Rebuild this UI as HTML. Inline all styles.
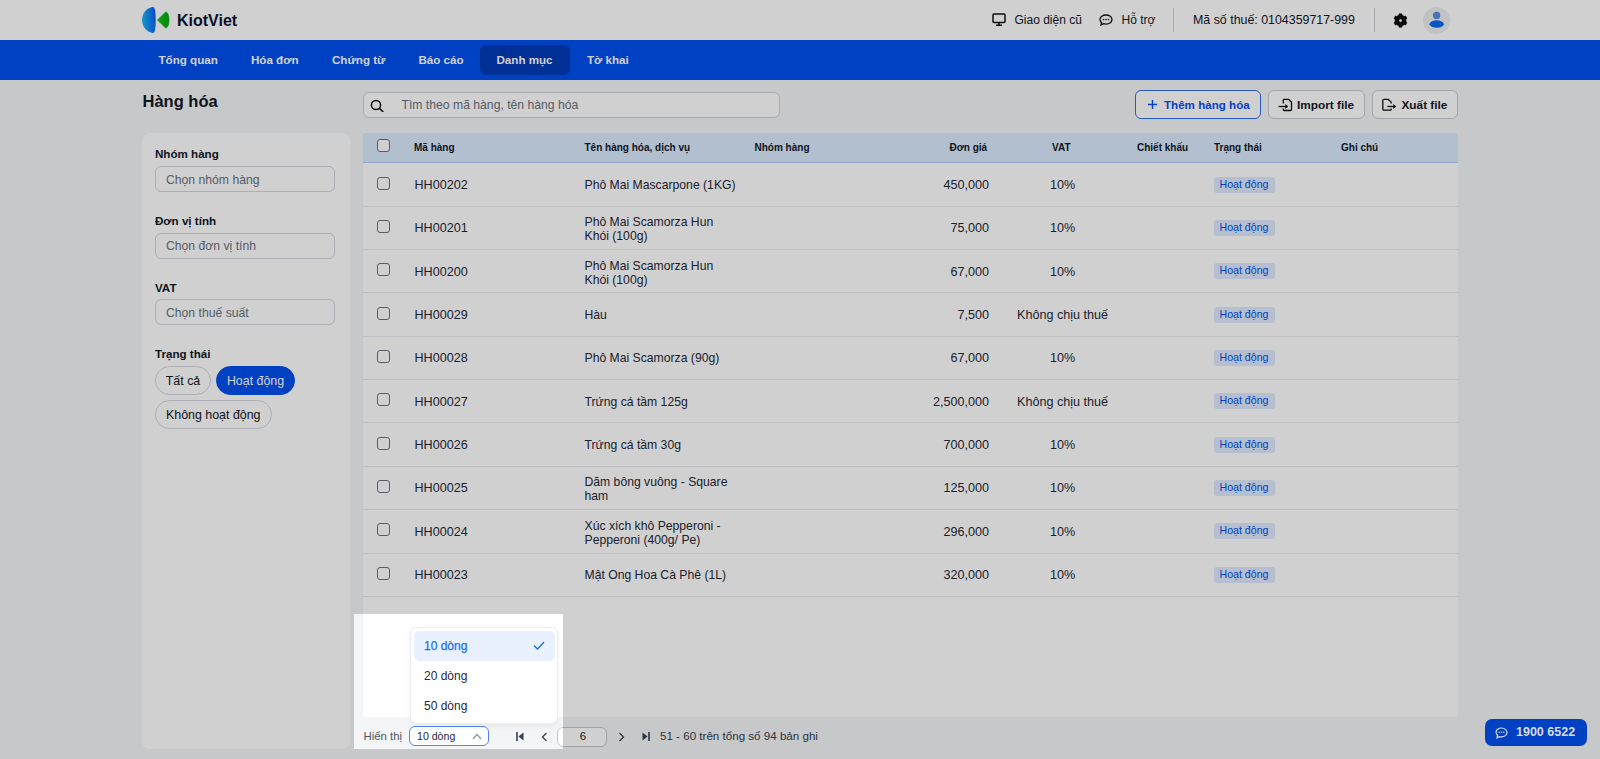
<!DOCTYPE html>
<html><head><meta charset="utf-8">
<style>
*{box-sizing:border-box;margin:0;padding:0}
html,body{width:1600px;height:759px;overflow:hidden}
body{position:relative;background:#f4f5f7;font-family:"Liberation Sans",sans-serif;color:#111827}
.abs{position:absolute}
.t{position:absolute;white-space:nowrap;line-height:20px;height:20px}
#hdr{left:0;top:0;width:1600px;height:40px;background:#fff}
#nav{left:0;top:40px;width:1600px;height:40px;background:#0050f0}
.nv{position:absolute;top:49.6px;height:20px;line-height:20px;font-size:11.6px;font-weight:700;color:#fff;white-space:nowrap}
#navact{left:480px;top:45px;width:90px;height:30px;border-radius:6px;background:#003ab8}
.card{position:absolute;background:#fff;border-radius:8px}
.inp{position:absolute;left:155px;width:180px;height:26px;border:1px solid #d4d7dd;border-radius:6px;background:#fff}
.inp span{position:absolute;left:10px;top:2.6px;line-height:20px;font-size:12.2px;color:#6b7280;white-space:nowrap}
.lbl{position:absolute;left:155px;height:20px;line-height:20px;font-size:11.6px;font-weight:700;color:#111827;white-space:nowrap}
.chip{position:absolute;height:29px;padding-top:0.3px;border:1px solid #d4d7dd;border-radius:15px;background:#fff;font-size:12.4px;line-height:29px;text-align:center;white-space:nowrap;color:#111827}
.btn{position:absolute;top:90px;height:28.5px;border:1px solid #c9ced6;border-radius:6px;background:#fff}
.btn span{position:absolute;top:4px;line-height:20px;font-size:11.8px;font-weight:700;white-space:nowrap;color:#111827}
#thead{left:363px;top:133px;width:1095px;height:30px;background:#dbeafe;border-bottom:1px solid #afcdfa;border-radius:3px 3px 0 0}
.th{position:absolute;top:138px;height:20px;line-height:20px;font-size:10px;font-weight:700;white-space:nowrap;color:#111827}
.row{position:absolute;left:363px;width:1095px;border-bottom:1px solid #e3e6ea}
.cb{position:absolute;left:376.8px;width:13px;height:13px;border:1.3px solid #6b7280;border-radius:3px;background:#fff}
.td{position:absolute;height:20px;line-height:20px;font-size:12.6px;white-space:nowrap;color:#1f2937}
.td2{position:absolute;line-height:14px;font-size:12.6px;white-space:nowrap;color:#1f2937}
.badge{position:absolute;left:1213.5px;width:61px;height:16px;border-radius:3px;background:#dfeaff;color:#0050f0;font-size:10.6px;line-height:15px;text-align:center;white-space:nowrap}
</style></head><body>

<!-- header -->
<div id="hdr" class="abs"></div>
<svg class="abs" style="left:141px;top:6px" width="30" height="28" viewBox="0 0 30 28">
  <defs><linearGradient id="lg" x1="0" x2="1" y1="0.2" y2="0"><stop offset="0" stop-color="#1fb4f5"/><stop offset="1" stop-color="#0558f5"/></linearGradient>
  <linearGradient id="lg2" x1="0" x2="1" y1="0" y2="0"><stop offset="0" stop-color="#10c418"/><stop offset="1" stop-color="#06a812"/></linearGradient></defs>
  <path d="M11.5 1 C13.7 1 14.6 3 14.7 14 C14.6 25 13.7 27 11.5 27 C7 26 1 22 1 14 C1 6 7 1.8 11.5 1Z" fill="url(#lg)"/>
  <path d="M16.4 14 L24.6 6 C27 6.2 28 10 28 14 C28 18 27 21.8 24.6 22 Z" fill="url(#lg2)" stroke="url(#lg2)" stroke-width="0.6" stroke-linejoin="round"/>
</svg>
<div class="t" style="left:177px;top:10.7px;font-size:16px;font-weight:700;color:#0b1437">KiotViet</div>

<svg class="abs" style="left:992px;top:13px" width="14" height="13" viewBox="0 0 14 13"><rect x="1" y="1" width="12" height="8.5" rx="1" fill="none" stroke="#111" stroke-width="1.5"/><path d="M4 12.2h6M7 9.5v2.7" stroke="#111" stroke-width="1.5"/></svg>
<div class="t" style="left:1014.5px;top:10px;font-size:12px;color:#111827">Giao diện cũ</div>
<svg class="abs" style="left:1099px;top:14px" width="14" height="12" viewBox="0 0 14 12"><path d="M7 1C3.7 1 1 3 1 5.6c0 1.3.7 2.4 1.7 3.2L2 11l2.6-1.3c.8.3 1.6.4 2.4.4 3.3 0 6-2 6-4.6S10.3 1 7 1z" fill="none" stroke="#111" stroke-width="1.3"/><circle cx="4.5" cy="5.6" r=".8" fill="#111"/><circle cx="7" cy="5.6" r=".8" fill="#111"/><circle cx="9.5" cy="5.6" r=".8" fill="#111"/></svg>
<div class="t" style="left:1121.5px;top:10px;font-size:12px;color:#111827">Hỗ trợ</div>
<div class="abs" style="left:1173px;top:8px;width:1px;height:24px;background:#c8ccd2"></div>
<div class="t" style="left:1193px;top:10px;font-size:12.4px;color:#111827">Mã số thuế: 0104359717-999</div>
<div class="abs" style="left:1374px;top:8px;width:1px;height:24px;background:#c8ccd2"></div>
<svg class="abs" style="left:1392.6px;top:12.9px" width="15" height="15" viewBox="0 0 24 24"><path fill="#0d0d0d" fill-rule="evenodd" stroke="#0d0d0d" stroke-width="0.8" stroke-linejoin="round" d="M7.55 4.29 L9.25 3.54 L9.71 1.24 L14.29 1.24 L14.75 3.54 L16.45 4.29 L17.96 5.39 L20.17 4.64 L22.46 8.60 L20.71 10.15 L20.90 12.00 L20.71 13.85 L22.46 15.40 L20.17 19.36 L17.96 18.61 L16.45 19.71 L14.75 20.46 L14.29 22.76 L9.71 22.76 L9.25 20.46 L7.55 19.71 L6.04 18.61 L3.83 19.36 L1.54 15.40 L3.29 13.85 L3.10 12.00 L3.29 10.15 L1.54 8.60 L3.83 4.64 L6.04 5.39Z M12 9.4a2.6 2.6 0 1 0 0 5.2a2.6 2.6 0 1 0 0-5.2z"/></svg>
<div class="abs" style="left:1423px;top:6.5px;width:27px;height:27px;border-radius:50%;background:#eceef1"></div>
<svg class="abs" style="left:1423px;top:6px" width="28" height="28" viewBox="0 0 28 28"><circle cx="13.6" cy="9.4" r="3.7" fill="#5a8fe6"/><path d="M6.2 18.2C7.5 15.4 10.5 14.3 13.7 14.3S19.9 15.4 21.2 18.2C19.9 20.6 17 21.7 13.7 21.7S7.5 20.6 6.2 18.2Z" fill="#0a6af0"/></svg>

<!-- nav -->
<div id="nav" class="abs"></div>
<div id="navact" class="abs"></div>
<div class="nv" style="left:158.5px">Tổng quan</div>
<div class="nv" style="left:251px">Hóa đơn</div>
<div class="nv" style="left:332px">Chứng từ</div>
<div class="nv" style="left:418.5px">Báo cáo</div>
<div class="nv" style="left:496.5px">Danh mục</div>
<div class="nv" style="left:587px">Tờ khai</div>

<!-- title + search + buttons -->
<div class="t" style="left:142.5px;top:91px;font-size:16.5px;font-weight:700;color:#111827">Hàng hóa</div>
<div class="abs" style="left:363px;top:91.8px;width:417px;height:26.6px;border:1px solid #cfd3da;border-radius:6px;background:#fff"></div>
<svg class="abs" style="left:370px;top:99px" width="15" height="13" viewBox="0 0 15 13"><circle cx="6" cy="6" r="4.6" fill="none" stroke="#111" stroke-width="1.5"/><path d="M9.4 9.4l3.4 3.1" stroke="#111" stroke-width="1.6" stroke-linecap="round"/></svg>
<div class="t" style="left:401.5px;top:95px;font-size:12.2px;color:#6b7280">Tìm theo mã hàng, tên hàng hóa</div>

<div class="btn" style="left:1135px;width:126px;border-color:#2f6ff0"><span style="left:28px;color:#0a4ff5;font-size:11.6px">Thêm hàng hóa</span></div>
<svg class="abs" style="left:1146.5px;top:99px" width="11" height="11" viewBox="0 0 11 11"><path d="M5.5 1v9M1 5.5h9" stroke="#0a4ff5" stroke-width="1.4"/></svg>
<div class="btn" style="left:1267.5px;width:97px"><span style="left:28.5px">Import file</span></div>
<svg class="abs" style="left:1277.5px;top:98px" width="15" height="14" viewBox="0 0 15 14"><path d="M5.3 5.6V2.3c0-.6.4-1 1-1h4.2l3 3v7.2c0 .6-.4 1-1 1H6.3c-.6 0-1-.4-1-1v-.9" fill="none" stroke="#111" stroke-width="1.3" stroke-linejoin="round"/><path d="M0.6 8.5h7.4" stroke="#111" stroke-width="1.3"/><path d="M7.3 6.1l2.9 2.4-2.9 2.4z" fill="#111"/></svg>
<div class="btn" style="left:1372px;width:86px"><span style="left:28.5px">Xuất file</span></div>
<svg class="abs" style="left:1382px;top:98px" width="15" height="14" viewBox="0 0 15 14"><path d="M9.2 5.4V4.3l-3-3H1.8c-.6 0-1 .4-1 1v8.9c0 .6.4 1 1 1h6.4c.6 0 1-.4 1-1v-.8" fill="none" stroke="#111" stroke-width="1.3" stroke-linejoin="round"/><path d="M5.4 8.5h6.6" stroke="#111" stroke-width="1.3"/><path d="M11.3 6.1l2.9 2.4-2.9 2.4z" fill="#111"/></svg>

<!-- sidebar -->
<div class="card" style="left:142px;top:133px;width:207.5px;height:616px"></div>
<div class="lbl" style="top:144px">Nhóm hàng</div>
<div class="inp" style="top:166px"><span>Chọn nhóm hàng</span></div>
<div class="lbl" style="top:211px">Đơn vị tính</div>
<div class="inp" style="top:232.5px"><span>Chọn đơn vị tính</span></div>
<div class="lbl" style="top:277.5px">VAT</div>
<div class="inp" style="top:299px"><span>Chọn thuế suất</span></div>
<div class="lbl" style="top:343.5px">Trạng thái</div>
<div class="chip" style="left:155px;top:366px;width:56px">Tất cả</div>
<div class="chip" style="left:216px;top:366px;width:79px;background:#0050f0;border-color:#0050f0;color:#fff">Hoạt động</div>
<div class="chip" style="left:155px;top:400px;width:116.5px">Không hoạt động</div>

<!-- table card -->
<div class="card" style="left:363px;top:133px;width:1095px;height:584px;border-radius:3px"></div>
<div id="thead" class="abs"></div>
<div class="cb" style="top:139px"></div>
<div class="th" style="left:414px">Mã hàng</div>
<div class="th" style="left:584.5px">Tên hàng hóa, dịch vụ</div>
<div class="th" style="left:754.5px">Nhóm hàng</div>
<div class="th" style="left:949.5px">Đơn giá</div>
<div class="th" style="left:1052px">VAT</div>
<div class="th" style="left:1137px">Chiết khấu</div>
<div class="th" style="left:1214px">Trạng thái</div>
<div class="th" style="left:1341px">Ghi chú</div>

<div class="abs" style="left:363px;top:206px;width:1095px;height:1px;background:#e8eaee"></div>
<div class="cb" style="top:176.80px"></div>
<div class="td" style="left:414.5px;top:175.10px">HH00202</div>
<div class="td" style="left:584.5px;top:175.10px;font-size:12.2px">Phô Mai Mascarpone (1KG)</div>
<div class="td" style="left:889px;width:100px;text-align:right;top:175.10px">450,000</div>
<div class="td" style="left:1012.5px;width:100px;text-align:center;top:175.10px">10%</div>
<div class="badge" style="top:176.80px">Hoạt động</div>
<div class="abs" style="left:363px;top:249px;width:1095px;height:1px;background:#e8eaee"></div>
<div class="cb" style="top:220.13px"></div>
<div class="td" style="left:414.5px;top:218.43px">HH00201</div>
<div class="td2" style="left:584.5px;top:215.23px;font-size:12.2px">Phô Mai Scamorza Hun<br>Khói (100g)</div>
<div class="td" style="left:889px;width:100px;text-align:right;top:218.43px">75,000</div>
<div class="td" style="left:1012.5px;width:100px;text-align:center;top:218.43px">10%</div>
<div class="badge" style="top:220.13px">Hoạt động</div>
<div class="abs" style="left:363px;top:292px;width:1095px;height:1px;background:#e8eaee"></div>
<div class="cb" style="top:263.46px"></div>
<div class="td" style="left:414.5px;top:261.76px">HH00200</div>
<div class="td2" style="left:584.5px;top:258.56px;font-size:12.2px">Phô Mai Scamorza Hun<br>Khói (100g)</div>
<div class="td" style="left:889px;width:100px;text-align:right;top:261.76px">67,000</div>
<div class="td" style="left:1012.5px;width:100px;text-align:center;top:261.76px">10%</div>
<div class="badge" style="top:263.46px">Hoạt động</div>
<div class="abs" style="left:363px;top:336px;width:1095px;height:1px;background:#e8eaee"></div>
<div class="cb" style="top:306.79px"></div>
<div class="td" style="left:414.5px;top:305.09px">HH00029</div>
<div class="td" style="left:584.5px;top:305.09px;font-size:12.2px">Hàu</div>
<div class="td" style="left:889px;width:100px;text-align:right;top:305.09px">7,500</div>
<div class="td" style="left:1012.5px;width:100px;text-align:center;top:305.09px">Không chịu thuế</div>
<div class="badge" style="top:306.79px">Hoạt động</div>
<div class="abs" style="left:363px;top:379px;width:1095px;height:1px;background:#e8eaee"></div>
<div class="cb" style="top:350.12px"></div>
<div class="td" style="left:414.5px;top:348.42px">HH00028</div>
<div class="td" style="left:584.5px;top:348.42px;font-size:12.2px">Phô Mai Scamorza (90g)</div>
<div class="td" style="left:889px;width:100px;text-align:right;top:348.42px">67,000</div>
<div class="td" style="left:1012.5px;width:100px;text-align:center;top:348.42px">10%</div>
<div class="badge" style="top:350.12px">Hoạt động</div>
<div class="abs" style="left:363px;top:422px;width:1095px;height:1px;background:#e8eaee"></div>
<div class="cb" style="top:393.45px"></div>
<div class="td" style="left:414.5px;top:391.75px">HH00027</div>
<div class="td" style="left:584.5px;top:391.75px;font-size:12.2px">Trứng cá tầm 125g</div>
<div class="td" style="left:889px;width:100px;text-align:right;top:391.75px">2,500,000</div>
<div class="td" style="left:1012.5px;width:100px;text-align:center;top:391.75px">Không chịu thuế</div>
<div class="badge" style="top:393.45px">Hoạt động</div>
<div class="abs" style="left:363px;top:466px;width:1095px;height:1px;background:#e8eaee"></div>
<div class="cb" style="top:436.78px"></div>
<div class="td" style="left:414.5px;top:435.08px">HH00026</div>
<div class="td" style="left:584.5px;top:435.08px;font-size:12.2px">Trứng cá tầm 30g</div>
<div class="td" style="left:889px;width:100px;text-align:right;top:435.08px">700,000</div>
<div class="td" style="left:1012.5px;width:100px;text-align:center;top:435.08px">10%</div>
<div class="badge" style="top:436.78px">Hoạt động</div>
<div class="abs" style="left:363px;top:509px;width:1095px;height:1px;background:#e8eaee"></div>
<div class="cb" style="top:480.11px"></div>
<div class="td" style="left:414.5px;top:478.41px">HH00025</div>
<div class="td2" style="left:584.5px;top:475.21px;font-size:12.2px">Dăm bông vuông - Square<br>ham</div>
<div class="td" style="left:889px;width:100px;text-align:right;top:478.41px">125,000</div>
<div class="td" style="left:1012.5px;width:100px;text-align:center;top:478.41px">10%</div>
<div class="badge" style="top:480.11px">Hoạt động</div>
<div class="abs" style="left:363px;top:553px;width:1095px;height:1px;background:#e8eaee"></div>
<div class="cb" style="top:523.44px"></div>
<div class="td" style="left:414.5px;top:521.74px">HH00024</div>
<div class="td2" style="left:584.5px;top:518.54px;font-size:12.2px">Xúc xích khô Pepperoni -<br>Pepperoni (400g/ Pe)</div>
<div class="td" style="left:889px;width:100px;text-align:right;top:521.74px">296,000</div>
<div class="td" style="left:1012.5px;width:100px;text-align:center;top:521.74px">10%</div>
<div class="badge" style="top:523.44px">Hoạt động</div>
<div class="abs" style="left:363px;top:596px;width:1095px;height:1px;background:#e8eaee"></div>
<div class="cb" style="top:566.77px"></div>
<div class="td" style="left:414.5px;top:565.07px">HH00023</div>
<div class="td" style="left:584.5px;top:565.07px;font-size:12.2px">Mật Ong Hoa Cà Phê (1L)</div>
<div class="td" style="left:889px;width:100px;text-align:right;top:565.07px">320,000</div>
<div class="td" style="left:1012.5px;width:100px;text-align:center;top:565.07px">10%</div>
<div class="badge" style="top:566.77px">Hoạt động</div>

<!-- pagination -->
<div class="t" style="left:363.5px;top:725.8px;font-size:11.4px;color:#4b5563">Hiển thị</div>
<div class="abs" style="left:409px;top:726.2px;width:80px;height:20.3px;border:1px solid #4f86f7;border-radius:6px;background:#fff"></div>
<div class="t" style="left:417px;top:725.8px;font-size:10.6px;color:#1f2937">10 dòng</div>
<svg class="abs" style="left:472px;top:733px" width="10" height="7" viewBox="0 0 10 7"><path d="M1 6l4-4.5L9 6" fill="none" stroke="#8b93a1" stroke-width="1.2"/></svg>
<svg class="abs" style="left:516px;top:732px" width="8" height="9" viewBox="0 0 8 9"><path d="M1 0v9" stroke="#374151" stroke-width="1.6"/><path d="M7.5 0.5v8L2.5 4.5z" fill="#374151"/></svg>
<svg class="abs" style="left:541px;top:731.5px" width="7" height="10" viewBox="0 0 7 10"><path d="M5.5 1L1.5 5l4 4" fill="none" stroke="#374151" stroke-width="1.3"/></svg>
<div class="abs" style="left:557px;top:726.5px;width:50px;height:20px;border:1px solid #c4c8cf;border-radius:6px;background:#fff"></div>
<div class="t" style="left:557.8px;width:50px;text-align:center;top:725.8px;font-size:11.4px;color:#111827">6</div>
<svg class="abs" style="left:618px;top:731.5px" width="7" height="10" viewBox="0 0 7 10"><path d="M1.5 1l4 4-4 4" fill="none" stroke="#374151" stroke-width="1.3"/></svg>
<svg class="abs" style="left:642px;top:732px" width="8" height="9" viewBox="0 0 8 9"><path d="M7 0v9" stroke="#374151" stroke-width="1.6"/><path d="M0.5 0.5v8L5.5 4.5z" fill="#374151"/></svg>
<div class="t" style="left:660px;top:725.8px;font-size:11.6px;color:#374151">51 - 60 trên tổng số 94 bản ghi</div>

<!-- dropdown -->
<div class="abs" style="left:409.7px;top:626.8px;width:148.7px;height:97.2px;background:#fff;border:1px solid #eceef1;border-radius:7px;box-shadow:0 2px 6px rgba(0,0,0,.06)"></div>
<div class="abs" style="left:413.5px;top:630.5px;width:141px;height:30px;background:#e8f1fd;border-radius:5px"></div>
<div class="t" style="left:424px;top:636px;font-size:12px;color:#1570ef;-webkit-text-stroke:0.25px #1570ef">10 dòng</div>
<svg class="abs" style="left:533px;top:641px" width="12" height="9" viewBox="0 0 12 9"><path d="M1 4.5l3.5 3.5L11 1" fill="none" stroke="#1a6fe8" stroke-width="1.3"/></svg>
<div class="t" style="left:424px;top:666px;font-size:12px;color:#1f2937">20 dòng</div>
<div class="t" style="left:424px;top:696px;font-size:12px;color:#1f2937">50 dòng</div>

<!-- overlay spotlight -->
<div class="abs" style="left:353.5px;top:614px;width:209px;height:134.9px;box-shadow:0 0 0 4000px rgba(0,0,0,0.185)"></div>

<!-- chat button (under overlay look) -->
<div class="abs" style="left:1485px;top:719px;width:102px;height:26.5px;border-radius:7px;background:#0041c4"></div>
<svg class="abs" style="left:1495px;top:726.5px" width="13" height="12" viewBox="0 0 13 12"><path d="M6.5 1C3.5 1 1 2.9 1 5.3c0 1.2.6 2.2 1.6 3L2 10.8l2.4-1.2c.7.2 1.4.3 2.1.3 3 0 5.5-1.9 5.5-4.3S9.5 1 6.5 1z" fill="none" stroke="#d8dbe0" stroke-width="1.2"/><circle cx="4.2" cy="5.3" r=".75" fill="#d8dbe0"/><circle cx="6.5" cy="5.3" r=".75" fill="#d8dbe0"/><circle cx="8.8" cy="5.3" r=".75" fill="#d8dbe0"/></svg>
<div class="t" style="left:1516px;top:722px;font-size:12.5px;font-weight:700;color:#d8dbe0">1900 6522</div>

</body></html>
